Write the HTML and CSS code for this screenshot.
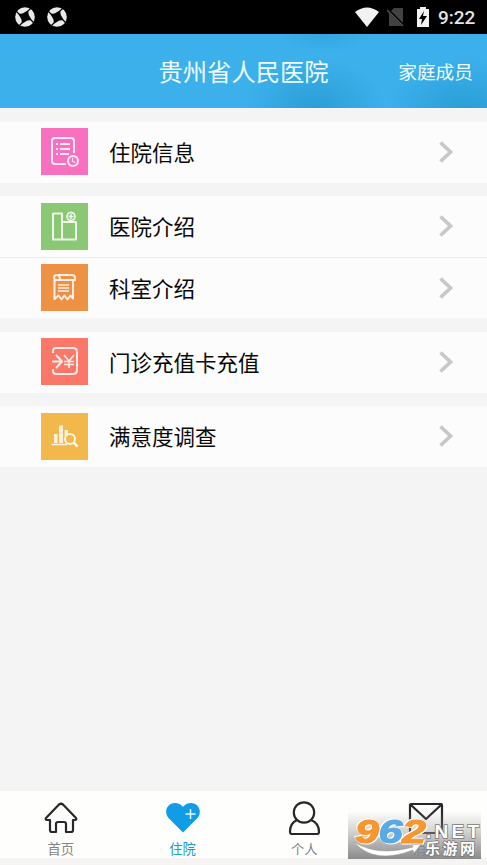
FILE: index.html
```html
<!DOCTYPE html>
<html lang="zh-CN">
<head>
<meta charset="utf-8">
<title>贵州省人民医院</title>
<link rel="stylesheet" href="styles.css">
</head>
<body>
<div class="status">
  <div class="status-left">
    <svg width="20" height="20" viewBox="0 0 20 20"><circle cx="10" cy="10" r="9.8" fill="#e9e9e9"/><path d="M13.500 3Q13 7 14 8.500T17 13.500Q13 13 11.500 14T6.500 17Q7 13 6 11.500T3 6.500Q7 7 8.500 6T13.500 3Z"/><path d="M13 4 16 1M16 13l3 3M7 16l-3 3M4 7 1 4" stroke="#000" stroke-width="1.200"/></svg>
    <svg width="20" height="20" viewBox="0 0 20 20"><circle cx="10" cy="10" r="9.8" fill="#e9e9e9"/><path d="M13.500 3Q13 7 14 8.500T17 13.500Q13 13 11.500 14T6.500 17Q7 13 6 11.500T3 6.500Q7 7 8.500 6T13.500 3Z"/><path d="M13 4 16 1M16 13l3 3M7 16l-3 3M4 7 1 4" stroke="#000" stroke-width="1.200"/></svg>
  </div>
  <div class="status-right">
    <svg width="24" height="20" viewBox="0 0 24 20"><path d="M0 5Q12-4 24 5L12 20Z" fill="#f2f2f2"/></svg>
    <svg class="sim" width="18" height="20" viewBox="0 0 18 20"><path d="M2 6 7 1h9v18H2Z" fill="#424242"/><path d="m0 2 17 17" stroke="#000" stroke-width="3"/><path d="m0 3 16 16" stroke="#555" stroke-width="1.5"/></svg>
    <svg class="battery" width="14" height="20" viewBox="0 0 14 20"><path d="M4 0h6v2h3v18H1V2h3Z" fill="#f2f2f2"/><path d="M8 4 3 12h3l-1 6 6-9H7l1-5Z"/></svg>
    <span class="clock">9:22</span>
  </div>
</div>
<header class="header">
  <h1>贵州省人民医院</h1>
  <span class="family">家庭成员</span>
</header>
<main class="list">
  <section class="group">
    <div class="row"><span class="tile pink"><svg width="47" height="47" viewBox="0 0 47 47"><path d="M25 36H14q-3 0-3-3V13q0-3 3-3h16q3 0 3 3v12"/><path d="M15 16h2m2 0h10M15 21h2m2 0h10M15 26h2m2 0h9"/><circle cx="32" cy="33" r="5"/><path d="M31.500 30v3.500l3 1" stroke-width="1.200"/></svg></span><span class="label">住院信息</span><svg class="arrow" width="14" height="22" viewBox="0 0 14 22"><path d="m1.500 1.500 10 9.500-10 9.500"/></svg></div>
  </section>
  <section class="group">
    <div class="row divided"><span class="tile green"><svg width="47" height="47" viewBox="0 0 47 47"><path d="M12 10.500h9v26h-9ZM21 19h14v17.500H21"/><path d="m27 10.500 3-1.300 3 1.300 1.200 3-1.200 3-3 1.300-3-1.300-1.200-3ZM27.500 13.500h5M30 11v5" stroke-width="1.600"/></svg></span><span class="label">医院介绍</span><svg class="arrow" width="14" height="22" viewBox="0 0 14 22"><path d="m1.500 1.500 10 9.500-10 9.500"/></svg></div>
    <div class="row short"><span class="tile orange"><svg width="47" height="47" viewBox="0 0 47 47"><path d="M16 11h15q3 0 3 3v2H16q-3 0-3-2.500t3-2.500q3 0 3 5M13.500 15v20l4-3.500 3 4 3-4 3 4 3-4 2.500 3V17" stroke-width="2"/><path d="M17 21h11M17 24h11M17 27h11" stroke-width="1.500"/></svg></span><span class="label">科室介绍</span><svg class="arrow" width="14" height="22" viewBox="0 0 14 22"><path d="m1.500 1.500 10 9.500-10 9.500"/></svg></div>
  </section>
  <section class="group">
    <div class="row"><span class="tile red"><svg width="47" height="47" viewBox="0 0 47 47"><path d="M12 15v-2q0-3 3-3h17q4 0 4 4v18q0 4-4 4H15q-3 0-3-3v-2M11 23.500h10M15 17l6 6.500-6 6.500"/><path d="m23 17 5 6 5-6M28 23v7M23 23.500h10M23 26.500h10" stroke-width="1.700"/></svg></span><span class="label">门诊充值卡充值</span><svg class="arrow" width="14" height="22" viewBox="0 0 14 22"><path d="m1.500 1.500 10 9.500-10 9.500"/></svg></div>
  </section>
  <section class="group">
    <div class="row"><span class="tile yellow"><svg width="47" height="47" viewBox="0 0 47 47"><path d="M13 21h3.500v9H13ZM18 12.500h4V30h-4ZM23.500 17h3.500v3l-3.500 3Z" fill="#fff0d8" stroke="none"/><path d="M10.500 31.500H26" stroke-width="1.500"/><circle cx="29" cy="26" r="5"/><path d="m32.500 29.500 4 4" stroke-width="2.700"/></svg></span><span class="label">满意度调查</span><svg class="arrow" width="14" height="22" viewBox="0 0 14 22"><path d="m1.500 1.500 10 9.500-10 9.500"/></svg></div>
  </section>
</main>
<nav class="tabs">
  <div class="tab"><svg width="36" height="34" viewBox="0 0 36 34"><path d="M3 17 16 3.500q2-1.500 4 0L33 17q1 2-1 2h-2v10q0 2-2 2h-5v-8q0-2-2-2h-6q-2 0-2 2v8H9q-2 0-2-2V19H4q-2 0-1-2Z"/></svg><span>首页</span></div>
  <div class="tab active"><svg width="36" height="34" viewBox="0 0 36 34"><path d="M18 31.500 3.500 17C-1.500 11 2 2 10 2q5 0 8 4 3-4 8-4c8 0 11.500 9 6.500 15Z" fill="#109de5" stroke="none"/><path class="plus" d="M20.500 13h10M25.500 8v10"/></svg><span>住院</span></div>
  <div class="tab"><svg width="36" height="34" viewBox="0 0 36 34"><circle cx="18" cy="11.500" r="10.200"/><path d="M11 19q-7 3-7 12 0 2 2 2h25q2 0 2-2 0-9-8-12"/></svg><span>个人</span></div>
  <div class="tab"><svg width="36" height="34" viewBox="0 0 36 34"><rect x="2" y="3" width="32" height="29" rx="1"/><path d="m3 4 15 14L33 4"/></svg><span>消息</span></div>
</nav>
<div class="watermark">
  <svg width="134" height="48" viewBox="0 0 134 48">
    <g class="digits"><text x="7" y="32" fill="#f6962f" stroke="#f6962f" textLength="24" lengthAdjust="spacingAndGlyphs">9</text><text x="30.500" y="32" fill="#58a9e4" stroke="#58a9e4" textLength="24" lengthAdjust="spacingAndGlyphs">6</text><text x="54" y="32" fill="#f6962f" stroke="#f6962f" textLength="24" lengthAdjust="spacingAndGlyphs">2</text></g>
    <path d="M6 31Q30 46 65 36l-1-2 9-1-7 9-1-3Q26 54 6 31Z" fill="#fff" stroke="#999" stroke-width=".5"/>
    <g class="brand"><text x="78" y="27" font-size="19" textLength="53" lengthAdjust="spacing">.NET</text><text x="77" y="43" font-size="15" textLength="50" lengthAdjust="spacing">乐游网</text></g>
  </svg>
</div>
</body>
</html>
```
FILE: styles.css
```css
* { box-sizing: border-box; }
body {
  margin: 0;
  width: 487px;
  height: 865px;
  overflow: hidden;
  position: relative;
  display: flex;
  flex-direction: column;
  background: #f4f4f4;
  font-family: "Noto Sans CJK SC", sans-serif;
}
svg { display: block; flex: none; }
.status {
  height: 34px;
  flex: none;
  background: #000;
  display: flex;
  justify-content: space-between;
  padding: 7px 11px 0 15px;
}
.status-left { display: flex; gap: 12px; }
.status-right { display: flex; }
.sim { margin-left: 8px; }
.battery { margin-left: 11px; }
.clock {
  margin-left: 8px;
  width: 38px;
  font: 500 19px/21px Roboto, sans-serif;
  color: #e4e4e4;
}
.header {
  height: 74px;
  flex: none;
  display: grid;
  grid-template-columns: 1fr 170px 1fr;
  align-items: center;
  color: #effcff;
  background:
    radial-gradient(ellipse 70px 50px at 315px 74px, #259ad0cc 0%, #259ad066 50%, #259ad000 100%),
    radial-gradient(ellipse 80px 50px at 465px 74px, #259ad0cc 0%, #259ad066 50%, #259ad000 100%),
    radial-gradient(ellipse 45px 18px at 325px 0, #2ba0da99 0%, #2ba0da00 100%),
    #3cb0eb;
}
.header h1 {
  grid-column: 2;
  margin: 0;
  font-size: 24.3px;
  line-height: 36px;
  font-weight: 400;
  white-space: nowrap;
  padding-bottom: 1px;
}
.family { justify-self: end; margin-right: 14px; font-size: 18.7px; line-height: 28px; }
.list { flex: 1; padding-top: 14px; display: flex; flex-direction: column; gap: 13.7px; }
.group { background: #fcfcfc; }
.row { height: 60.7px; display: flex; align-items: center; padding: 0 34px .8px 41px; }
.divided { height: 62px; border-bottom: 1px solid #ececec; }
.short { height: 59.8px; }
.tile { width: 47px; height: 47px; margin-right: 21px; flex: none; }
.tile svg { fill: none; stroke: #fff; stroke-opacity: .85; stroke-width: 2; stroke-linejoin: round; }
.pink { background: #f871c1; }
.green { background: #8bc873; }
.orange { background: #ed9144; }
.red { background: #fb7869; }
.yellow { background: #f2b84b; }
.label { flex: 1; font-size: 21.5px; line-height: 32px; color: #080808; }
.arrow { fill: none; stroke: #c8c8c8; stroke-width: 3.7; }
.tabs {
  height: 67px;
  flex: none;
  margin-bottom: 7px;
  background: #fefefd;
  display: grid;
  grid-template-columns: repeat(4, 1fr);
  box-shadow: 0 7px #f5f4f2;
}
.tab { display: flex; flex-direction: column; align-items: center; padding-top: 10px; color: #858585; }
.tab svg { fill: none; stroke: #292729; stroke-width: 2.2; stroke-linejoin: round; }
.tab .plus { stroke: #e6faff; stroke-width: 1.5; }
.tab span { font-size: 13.3px; line-height: 20px; margin-top: 4px; }
.active { color: #209bd1; }
.watermark {
  position: absolute;
  left: 348px;
  top: 811px;
  width: 133px;
  height: 48px;
  background: linear-gradient(#99999900 0%, #99999966 40%, #858585f5 100%);
}
.digits {
  font: italic 700 34px "Liberation Sans", sans-serif;
  stroke-width: 1.2;
  filter: drop-shadow(1px 1px 0 #fff) drop-shadow(-1px -1px 0 #fff);
}
.brand { font-family: "Liberation Sans", "Noto Sans CJK SC", sans-serif; font-weight: 700; fill: #fff; stroke: #777; stroke-width: 1.5; paint-order: stroke; }
```
